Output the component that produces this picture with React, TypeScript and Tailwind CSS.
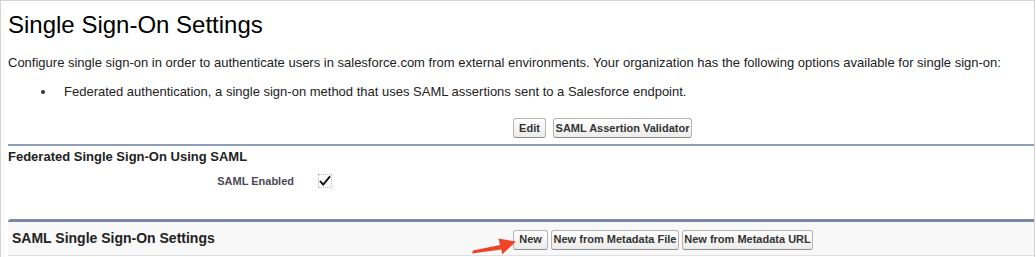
import React from "react";

function Btn({ children, w }: { children: React.ReactNode; w: string }) {
  return (
    <button className={`${w} h-[20px] px-0 whitespace-nowrap rounded-[3px] border border-[#b5b5b5] border-b-[#8f8f8f] bg-gradient-to-b from-white to-[#ececec] text-[11px] font-bold leading-none text-[#333] flex items-center justify-center`}>
      {children}
    </button>
  );
}

export default function App() {
  return (
    <div className="w-[1036px] h-[257px] bg-white overflow-hidden font-['Liberation_Sans',Arial,sans-serif] text-black">
      <div className="w-[1035px] h-[257px] border-t border-l border-r border-[#d4d4d4] pl-[7px] pt-[9px]">
        <h1 className="text-[24px] leading-[30px] font-normal">Single Sign-On Settings</h1>
        <p className="text-[13px] leading-[16px] mt-[15px] text-[#222]">
          Configure single sign-on in order to authenticate users in salesforce.com from external environments. Your organization has the following options available for single sign-on:
        </p>
        <ul className="mt-[13px] text-[13px] leading-[16px] text-[#222]">
          <li className="flex items-center gap-[19px] pl-[33px]">
            <span className="w-[4px] h-[4px] rounded-full bg-[#333]"></span>
            <span>Federated authentication, a single sign-on method that uses SAML assertions sent to a Salesforce endpoint.</span>
          </li>
        </ul>
        <div className="flex gap-[7px] mt-[18px] pl-[505px]">
          <Btn w="w-[33px]">Edit</Btn>
          <Btn w="w-[139px]">SAML Assertion Validator</Btn>
        </div>
        <div className="mt-[6px] h-[2px] bg-[#8e9dbe]"></div>
        <div className="pt-[3px] text-[13px] font-bold leading-[16px] text-[#222]">Federated Single Sign-On Using SAML</div>
        <div className="flex items-center mt-[7px] h-[18px]">
          <div className="w-[286px] text-right text-[11px] font-bold text-[#4a4a56]">SAML Enabled</div>
          <div className="ml-[24px] w-[14px] h-[14px] border border-dotted border-[#bbb] flex items-center justify-center">
            <svg width="13" height="12" viewBox="0 0 13 12">
              <path d="M1.5 6.5 L4.5 10 L11.5 1.5" fill="none" stroke="#111" strokeWidth="2" strokeLinecap="round" strokeLinejoin="round" />
            </svg>
          </div>
        </div>
        <div className="mt-[29px] h-[37px] border-t-[3px] border-t-[#7c87a3] border-b border-b-[#e0e0e0] bg-[#f8f8f8] flex items-center relative rounded-tl-[3px]">
          <div className="pl-[4px] w-[505px] text-[14px] font-bold text-[#222]">SAML Single Sign-On Settings</div>
          <div className="flex gap-[3px] mt-[2px]">
            <Btn w="w-[35px]">New</Btn>
            <Btn w="w-[128px]">New from Metadata File</Btn>
            <Btn w="w-[131px]">New from Metadata URL</Btn>
          </div>
          <svg className="absolute left-[463px] top-[11px]" width="46" height="23" viewBox="0 0 46 23">
            <path d="M1 20.5 L2 17.5 L29 12 L27.5 5.5 L45 8.5 L31 21.5 L30.5 16.5 Z" fill="#f0442a" />
          </svg>
        </div>
      </div>
    </div>
  );
}
